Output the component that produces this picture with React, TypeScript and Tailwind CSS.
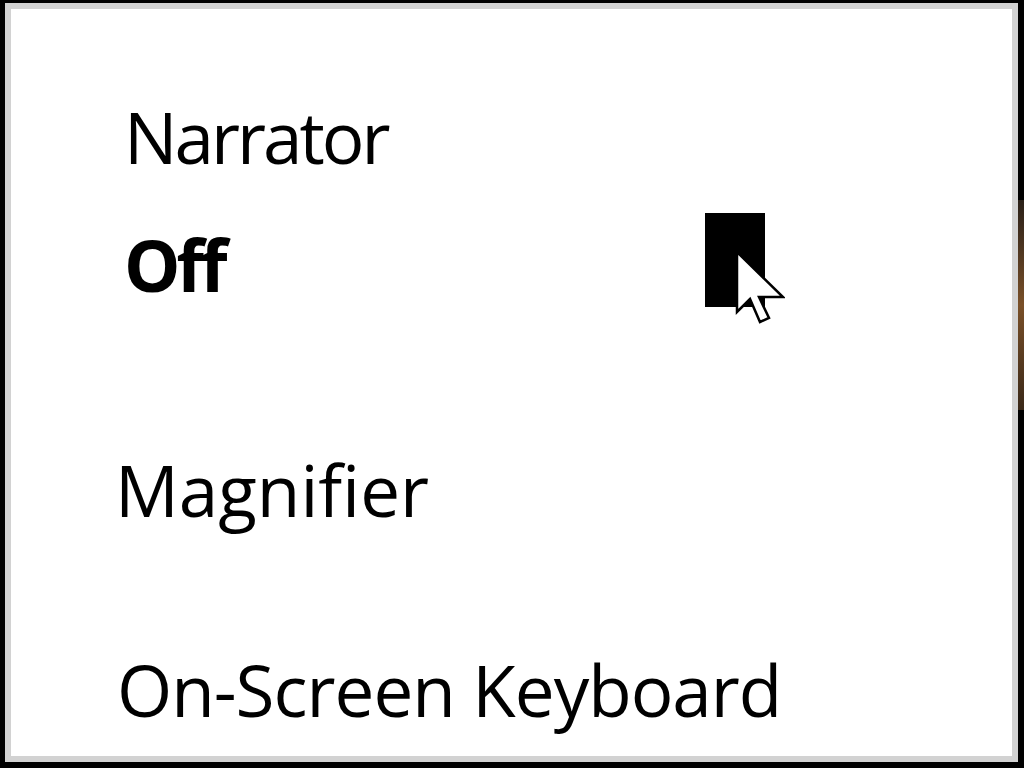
export default function App() {
  const font = { fontFamily: '"Open Sans", "Noto Sans", sans-serif' };

  return (
    <div className="flex h-[768px] w-[1024px] overflow-hidden bg-black" style={font}>
      <div className="ml-[5px] mt-[3px] mb-[6px] flex flex-1 flex-col border-[6px] border-[#d2d2d2] bg-white text-black">
        {/* Narrator */}
        <div className="pl-[113px]">
          <div className="mt-[92px] text-[71px] leading-[71px] tracking-[-3px]">Narrator</div>
          <div className="mt-[41px] flex h-[94px] items-start">
            <div className="mt-[16px] w-[581px] text-[71px] font-bold leading-[71px] tracking-[-4px]">Off</div>
            <div className="relative h-[94px] w-[60px] bg-black">
              <svg
                className="absolute left-[30px] top-[37px]"
                width="50"
                height="74"
                viewBox="-2 -2 50 74"
              >
                <path
                  d="M0 0 L0 60 L13 47 L23 70 L32 66 L22 45 L46 45 Z"
                  fill="white"
                  stroke="black"
                  strokeWidth="2.5"
                  strokeLinejoin="miter"
                />
              </svg>
            </div>
          </div>
        </div>

        {/* Magnifier */}
        <div className="mt-[147px] pl-[104px] text-[71px] leading-[71px]">Magnifier</div>

        {/* On-Screen Keyboard */}
        <div className="mt-[129px] pl-[106px] text-[71px] leading-[71px] tracking-[-1px]">On-Screen Keyboard</div>
      </div>

      {/* sliver of desktop behind */}
      <div className="flex w-[6px] flex-col">
        <div className="mt-[200px] h-[210px] bg-gradient-to-b from-[#2a2018] via-[#7a5028] to-[#3a2818]" />
      </div>
    </div>
  );
}
